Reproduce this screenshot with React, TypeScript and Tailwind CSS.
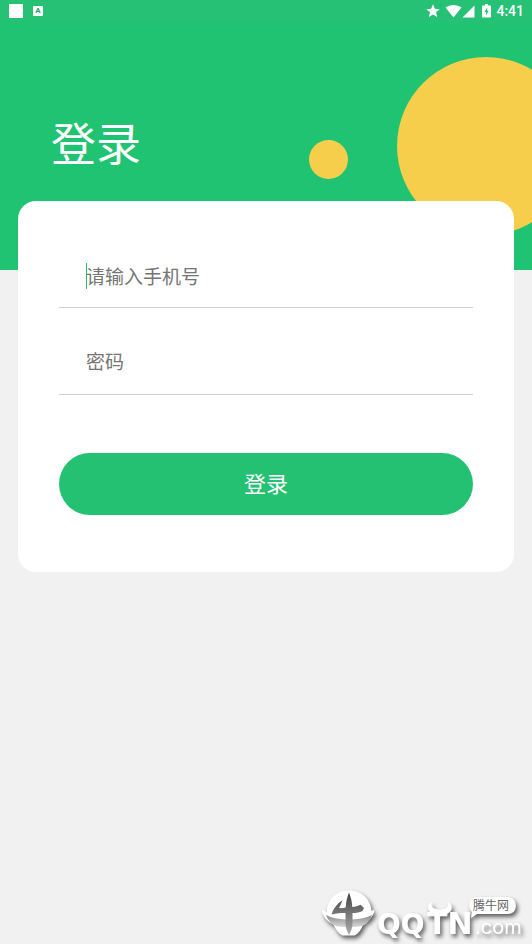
import { useState } from 'react';
import type { FormEvent } from 'react';

function StarIcon() {
  return (
    <svg viewBox="0 0 24 24" className="h-4 w-4" fill="currentColor" aria-hidden="true">
      <path d="M12 17.3 18.2 21l-1.7-7L22 9.2l-7.2-.6L12 2 9.2 8.6 2 9.2 7.5 14l-1.7 7z" />
    </svg>
  );
}

function WifiIcon() {
  return (
    <svg viewBox="0 0 17 14" className="h-3.5 w-[17px]" fill="currentColor" aria-hidden="true">
      <path d="M8.5 13.5.5 3.6C5 .2 12 .2 16.5 3.6z" />
    </svg>
  );
}

function SignalIcon() {
  return (
    <svg viewBox="0 0 13 13" className="h-[13px] w-[13px]" fill="currentColor" aria-hidden="true">
      <path d="M12.5.5v12H.5z" />
    </svg>
  );
}

function BatteryIcon() {
  return (
    <svg viewBox="0 0 9 14" className="h-3.5 w-[9px]" fill="currentColor" aria-hidden="true">
      <path d="M3 0h3v1.5h2.2q.8 0 .8.8v10.4q0 .8-.8.8H.8q-.8 0-.8-.8V2.3q0-.8.8-.8H3z" />
      <path d="M5.2 3.5 2.5 8h1.6v3.2l2.6-4.500H5.2z" fill="#26c175" />
    </svg>
  );
}

function StatusBar() {
  return (
    <div className="flex h-[22px] items-center justify-between bg-[#26c175] pr-2 pl-[9px] text-white">
      <div className="flex items-center gap-[10px]">
        <span className="h-3.5 w-3.5 bg-white" />
        <span className="flex h-[10px] w-[10px] items-center justify-center rounded-[1px] bg-white text-[8px] leading-none font-bold text-[#26a86a]">
          A
        </span>
      </div>
      <div className="flex items-center">
        <StarIcon />
        <span className="ml-1 flex">
          <WifiIcon />
        </span>
        <SignalIcon />
        <span className="ml-[7px] flex">
          <BatteryIcon />
        </span>
        <span className="ml-[5px] text-sm leading-[22px] font-medium">4:41</span>
      </div>
    </div>
  );
}

function SiteMark() {
  return (
    <svg
      viewBox="0 0 212 60"
      className="absolute right-0 bottom-0 h-[60px] w-[212px]"
      role="img"
      aria-label="QQTN.com 腾牛网"
    >
      <defs>
        <linearGradient id="hornShade" x1="0" y1="0" x2="0" y2="1">
          <stop offset="0" stopColor="#444" />
          <stop offset="0.5" stopColor="#777" />
          <stop offset="1" stopColor="#b0b0b0" />
        </linearGradient>
        <linearGradient id="bandShade" x1="0" y1="0" x2="0" y2="1">
          <stop offset="0" stopColor="#8a8a8a" />
          <stop offset="1" stopColor="#d8d8d8" />
        </linearGradient>
      </defs>
      <g className="drop-shadow-[2px_3px_2px_rgba(0,0,0,0.6)]" fill="#fff">
        {/* ball and the wings around it */}
        <path d="M7 28C7 15 17 6.500 29 6.500S51 15 51.500 27l3-1.500c-.5 6-5 11-11 14-2 6-5 10-9 12h-12c-4-2-7-6-9-11C8 38 2.500 33 2 26z" />
        {/* horns */}
        <path d="M112 18c-6.500 3-5.500 13 8 13s14.500-10 7.500-13c2 5-2 7.500-7.500 7.500s-10-2.500-8-7.500z" />
        <path d="M157 13h31c10 0 11 17 0 17h-31l-6 4 1-6c-5-4-3-15 5-15z" />
        <text y="50" fontWeight="700" fontFamily="'DejaVu Sans', sans-serif">
          <tspan x="57" fontSize="28">
            QQ
          </tspan>
          <tspan x="107" fontSize="30">
            TN
          </tspan>
        </text>
        <text x="155" y="50" fontSize="20" fontFamily="Inter, sans-serif">
          .com
        </text>
      </g>
      {/* bull's head inside the ball */}
      <path
        d="M6 31c6 3 12 4 20 4.500V43c-7 0-12-1-15-4-2-2-4-5-5-8zM52 31c-6 3-12 4-20 4.500V43c7 0 12-1 15-4 2-2 4-5 5-8z"
        fill="url(#bandShade)"
      />
      <path
        d="M29 8.500c2 5 3 9.500 3.300 14.500 3-.2 6-1 8.200-2.200L44 24c-.3-1.500-.3-1.500 0 0l-1.500 3c-3 1.500-6 2-10 2v10c0 5-1.500 8.500-3.500 12-2-3.500-3.500-7-3.500-12V29c-5 0-8.500 0-14 1.500 2-6 5-10 11-14.500-1 3-2 5-3.500 8 2 .3 4 .2 6.700-.5.3-5.500 1.300-10 3.300-15z"
        fill="url(#hornShade)"
      />
      <text x="153" y="26" fontSize="12" fill="#666" fontFamily="'Noto Sans CJK SC', sans-serif">
        腾牛网
      </text>
    </svg>
  );
}

export default function App() {
  const [phone, setPhone] = useState('');
  const [password, setPassword] = useState('');

  const handleSubmit = (e: FormEvent) => {
    e.preventDefault();
  };

  return (
    <div className="relative min-h-screen bg-[#f1f1f1] font-[Roboto,'Noto_Sans_CJK_SC',sans-serif]" lang="zh-CN">
      <header className="relative overflow-hidden bg-[#1fc371] pb-[90px] text-white">
        <StatusBar />
        <span className="absolute top-[140px] left-[309px] h-[39px] w-[39px] rounded-full bg-[#f7cd4c]" />
        <span className="absolute top-[57px] left-[397px] h-[178px] w-[178px] rounded-full bg-[#f7cd4c]" />
        <h1 className="relative mt-[90px] pl-[51px] text-[45px] leading-[68px]">登录</h1>
      </header>

      <main className="relative -mt-[69px] px-[18px]">
        <form onSubmit={handleSubmit} className="rounded-[18px] bg-white px-[41px] pt-[46px] pb-[57px]">
          <div className="relative border-b border-[#cfcfcf]">
            {phone === '' && <span className="absolute top-4 left-[27px] h-[26px] w-px bg-[#24c173]" />}
            <input
              type="tel"
              aria-label="请输入手机号"
              placeholder="请输入手机号"
              value={phone}
              onChange={(e) => setPhone(e.target.value)}
              className="block h-[60px] w-full bg-transparent px-[27px] text-[19px] text-[#333] caret-[#24c173] outline-none placeholder:text-[#757575]"
            />
          </div>
          <div className="mt-[26px] border-b border-[#cfcfcf]">
            <input
              type="password"
              aria-label="密码"
              placeholder="密码"
              value={password}
              onChange={(e) => setPassword(e.target.value)}
              className="block h-[60px] w-full bg-transparent px-[27px] pb-1 text-[19px] text-[#333] caret-[#24c173] outline-none placeholder:text-[#757575]"
            />
          </div>
          <button
            type="submit"
            className="mt-[58px] block h-[62px] w-full rounded-full bg-[#24c173] text-[22px] text-white"
          >
            登录
          </button>
        </form>
      </main>

      <SiteMark />
    </div>
  );
}
